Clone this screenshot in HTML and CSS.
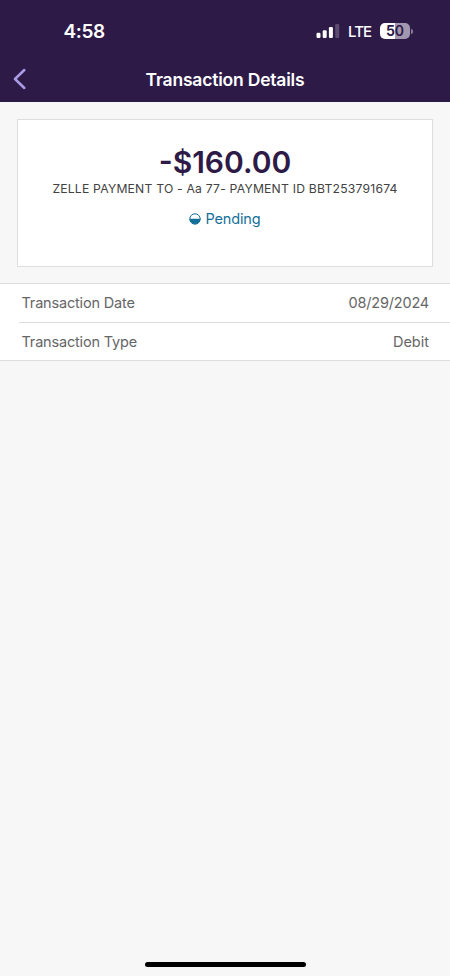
FILE: index.html
```html
<!DOCTYPE html>
<html lang="en">
<head>
<meta charset="utf-8">
<meta name="viewport" content="width=device-width, initial-scale=1">
<title>Transaction Details</title>
<link rel="stylesheet" href="styles.css">
</head>
<body>
<div class="screen">
  <header class="header">
    <div class="status">
      <span class="time">4:58</span>
      <div class="indicators">
        <svg class="signal" width="24" height="16" viewBox="0 0 24 16" fill="#fff">
          <rect x="0.5" y="9.8" width="4" height="5.2" rx="1.2"/>
          <rect x="6.7" y="7.2" width="4" height="7.8" rx="1.2"/>
          <rect x="12.9" y="4" width="4" height="11" rx="1.2"/>
          <rect x="19.2" y="1" width="4" height="14" rx="1.2" opacity=".22"/>
        </svg>
        <span class="network">LTE</span>
        <div class="battery"><span class="level">5<span class="dim">0</span></span></div>
        <span class="cap"></span>
      </div>
    </div>
    <nav class="nav">
      <svg class="back" width="13" height="22" viewBox="0 0 13 22" fill="none" stroke="#a99be6" stroke-width="2.5" stroke-linecap="round" stroke-linejoin="round"><path d="M11.3 2 2 11l9.3 9"/></svg>
      <h1 class="title">Transaction Details</h1>
    </nav>
  </header>
  <main class="main">
    <section class="card">
      <div class="amount">-$160.00</div>
      <div class="memo">ZELLE PAYMENT TO - Aa 77- PAYMENT ID BBT253791674</div>
      <div class="state">
        <svg width="12" height="12" viewBox="0 0 12 12"><circle cx="6" cy="6" r="5.2" fill="#fff" stroke="#146f99" stroke-width="1"/><path d="M.6 5.7h10.8a5.4 5.4 0 0 1-10.8 0z" fill="#146f99"/></svg>
        <span class="pending">Pending</span>
      </div>
    </section>
    <dl class="list">
      <div class="row"><dt class="date-label">Transaction Date</dt><dd class="date">08/29/2024</dd></div>
      <div class="row"><dt class="type-label">Transaction Type</dt><dd class="type">Debit</dd></div>
    </dl>
  </main>
  <div class="home"></div>
</div>
</body>
</html>
```
FILE: styles.css
```css
* { box-sizing: border-box; margin: 0; padding: 0; }
body { font-family: Inter, "Liberation Sans", sans-serif; background: #f7f7f7; }
.screen { height: 976px; display: flex; flex-direction: column; background: #f7f7f7; }
.header { height: 102px; background: #2e1a47; color: #fff; }
.status { height: 56px; padding: 6px 37px 0 63.5px; display: flex; align-items: center; justify-content: space-between; }
.time { font-size: 19px; font-weight: 600; line-height: 24px; letter-spacing: -.4px; padding-top: 1px; }
.indicators { display: flex; align-items: center; }
.network { margin-left: 8.5px; font-size: 15px; font-weight: 500; letter-spacing: -1px; line-height: 20px; padding-top: 1px; }
.battery { margin-left: 9px; width: 30px; height: 16px; border-radius: 5px; background: linear-gradient(90deg, #fff 50%, #a297ae 50%); color: #2e1a47; text-align: center; }
.level { display: block; font-size: 14px; font-weight: 700; line-height: 16px; }
.dim { font-weight: 600; }
.cap { width: 2px; height: 5px; margin-left: 1px; border-radius: 0 2px 2px 0; background: #8a7d99; }
.nav { height: 46px; display: grid; grid-template-columns: 60px 1fr 60px; align-items: center; }
.back { margin-left: 13px; }
.title { padding-top: 1px; font-size: 17.5px; font-weight: 600; line-height: 24px; letter-spacing: -.2px; text-align: center; white-space: nowrap; }
.main { flex: 1; padding-top: 17px; }
.card { margin: 0 17px; height: 148px; padding-top: 24px; border: 1px solid #dedede; background: #fff; text-align: center; white-space: nowrap; }
.amount { font-size: 30px; font-weight: 600; line-height: 37px; color: #2e1a47; }
.memo { font-size: 12.2px; letter-spacing: .2px; line-height: 16px; color: #424242; }
.state { margin-top: 12px; display: flex; align-items: center; justify-content: center; gap: 4px; color: #146f99; font-size: 14.5px; letter-spacing: -.15px; line-height: 20px; }
.list { margin-top: 16px; border-top: 1px solid #dedede; border-bottom: 1px solid #dedede; background: #fff; color: #666; font-size: 14.5px; }
.row { height: 38px; margin-left: 19px; padding: 0 21px 2px 2.5px; display: flex; align-items: center; justify-content: space-between; }
.row + .row { padding-bottom: 1px; border-top: 1px solid #dedede; }
.date-label, .type-label { letter-spacing: -.18px; }
.date { letter-spacing: -.2px; }
.home { width: 161px; height: 5px; margin: 0 auto 9px; border-radius: 3px; background: #000; }
```
